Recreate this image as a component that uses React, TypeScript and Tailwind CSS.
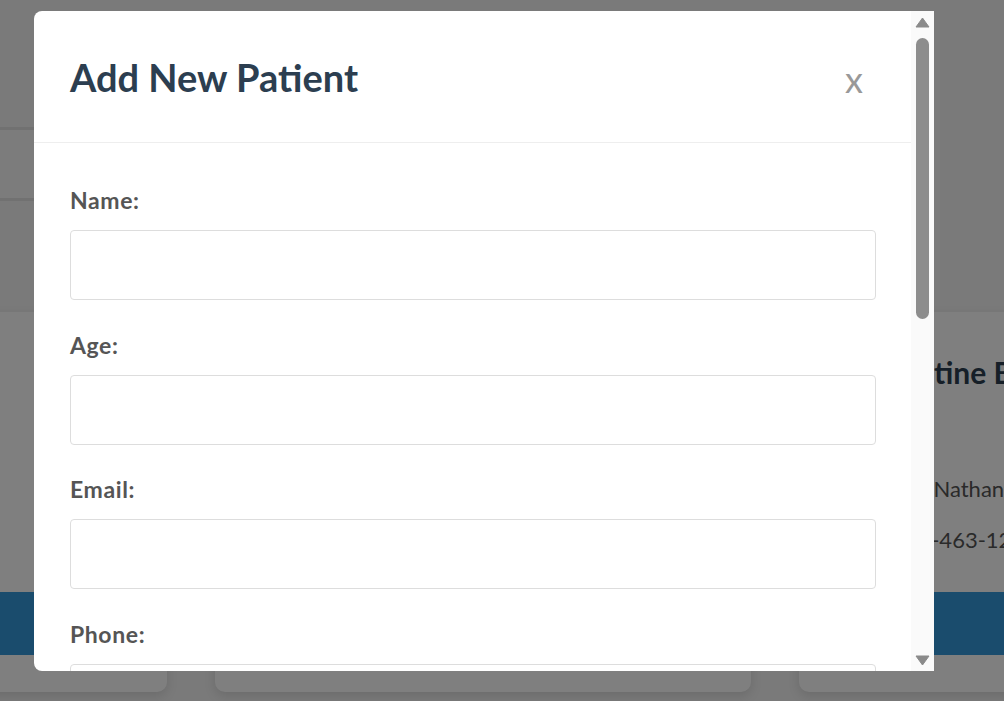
import React from 'react';

const fields = ['Name', 'Age', 'Email', 'Phone', 'Address'];

const PatientCard: React.FC<{ name: string; doctor: string; phone: string; age: string }> = ({ name, doctor, phone, age }) => (
  <div className="flex h-[380px] w-[536px] shrink-0 flex-col overflow-hidden rounded-[10px] bg-white shadow-[0_4px_12px_rgba(0,0,0,0.12)]">
    <div className="flex-1 pl-[21px] pr-5 pt-[40px] text-[#555]">
      <h3 className="pl-[4px] text-[30px] font-bold leading-[40px] text-[#2c3e50]">{name}</h3>
      <p className="mt-[20px] text-[22px] leading-[51px]">Age: {age}</p>
      <p className="text-[22px] leading-[51px]">Doctor: {doctor}</p>
      <p className="text-[22px] leading-[51px]">Phone: {phone}</p>
    </div>
    <div className="h-[63px] bg-[#3498db]" />
    <div className="h-[37px]" />
  </div>
);

export default function App() {
  return (
    <div className="relative h-[701px] w-full overflow-hidden bg-[#f4f4f4] font-['Lato',sans-serif]">
      {/* page behind the dialog */}
      <div className="flex flex-col">
        <div className="h-[127px]" />
        <div className="h-[74px] w-[760px] border-y-[3px] border-[#e2e2e2] bg-[#f8f8f8]" />
        <div className="h-[111px]" />
        <div className="ml-[-369px] flex gap-12">
          <PatientCard name="Margaret Ellison" doctor="Dr. Sarah Kim" phone="555-210-8842" age="62" />
          <PatientCard name="Daniel Okafor" doctor="Dr. Priya Shah" phone="555-781-3309" age="38" />
          <PatientCard name="Constantine Brooks" doctor="Dr. Nathan Reed" phone="555-463-1297" age="45" />
        </div>
      </div>

      {/* overlay */}
      <div className="absolute inset-0 bg-black/50 pl-[34px] pt-[11px]">
        <div className="flex h-[660px] w-[900px] overflow-hidden rounded-l-[8px] bg-white">
          <div className="flex-1 overflow-hidden">
            <div className="flex h-[132px] items-center justify-between border-b border-[#eeeeee] pl-9 pr-[48px]">
              <h2 className="text-[38px] font-bold leading-none text-[#2c3e50]">Add New Patient</h2>
              <button className="mt-[4px] text-[36px] leading-none text-[#999]">x</button>
            </div>
            <form className="pl-9 pr-[35px] pt-[42px]">
              {fields.map((f) => (
                <div key={f} className="mb-[29.5px]">
                  <label className="mb-[15px] block text-[23px] font-bold leading-[30px] tracking-[0.6px] text-[#555]">{f}:</label>
                  <input type="text" className="block h-[70px] w-full rounded-[4px] border border-[#dddddd] bg-white px-3 text-lg outline-none" />
                </div>
              ))}
            </form>
          </div>
          {/* scrollbar */}
          <div className="flex w-[23px] flex-col items-center bg-[#fafafa]">
            <svg width="15" height="11" viewBox="0 0 15 11" className="mt-[6px]">
              <path d="M7.5 1 L14 10 L1 10 Z" fill="#8a8a8a" strokeLinejoin="round" stroke="#8a8a8a" strokeWidth="1" />
            </svg>
            <div className="mt-[10px] h-[281px] w-[13px] rounded-full bg-[#8d8d8d]" />
            <div className="flex-1" />
            <svg width="15" height="11" viewBox="0 0 15 11" className="mb-[5px]">
              <path d="M1 1 L14 1 L7.5 10 Z" fill="#8a8a8a" strokeLinejoin="round" stroke="#8a8a8a" strokeWidth="1" />
            </svg>
          </div>
        </div>
      </div>
    </div>
  );
}
